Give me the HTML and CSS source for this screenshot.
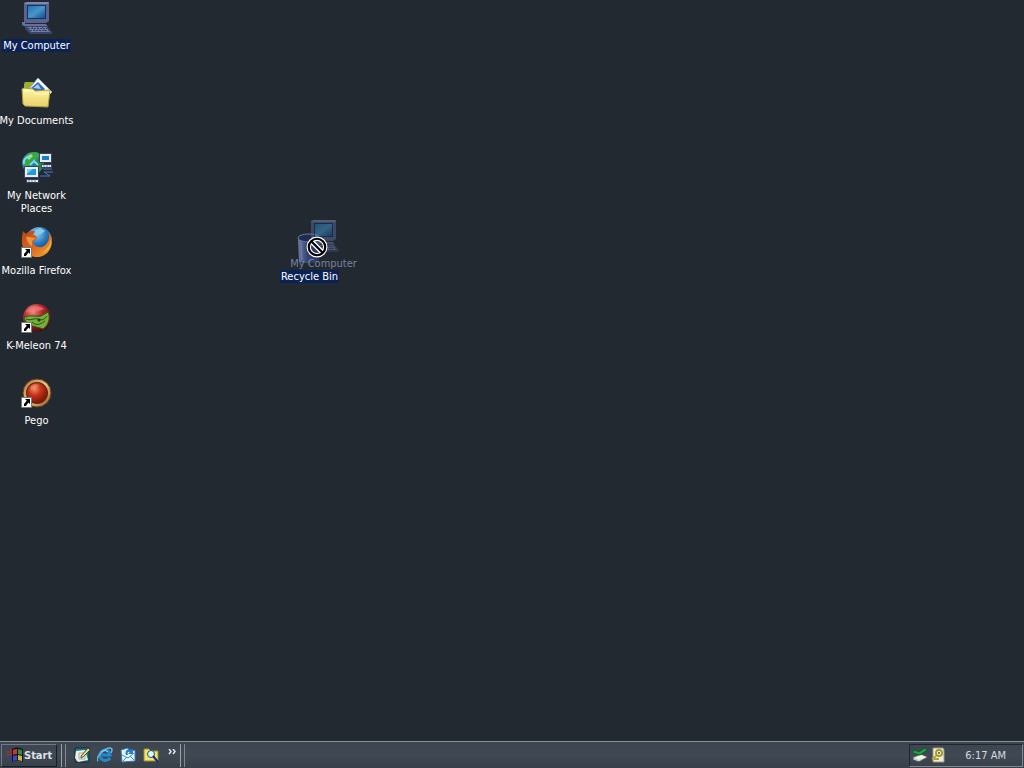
FILE: index.html
```
<!DOCTYPE html>
<html lang="en">
<head>
<meta charset="utf-8">
<title>Desktop</title>
<link rel="stylesheet" href="styles.css">
</head>
<body>
<svg class="defs" aria-hidden="true">
  <defs>
    <linearGradient id="screen" x1="0" y1="0" x2="1" y2="1"><stop offset="0" stop-color="#2274b4"/><stop offset=".5" stop-color="#4796c8"/><stop offset="1" stop-color="#12508c"/></linearGradient>
    <linearGradient id="folder" x1="0" y1="0" x2="0" y2="1"><stop offset="0" stop-color="#fff6a0"/><stop offset="1" stop-color="#e9cf68"/></linearGradient>
    <linearGradient id="bin" x1="0" y1="0" x2="1" y2="0"><stop offset="0" stop-color="#6e7db0"/><stop offset=".4" stop-color="#35436d"/><stop offset="1" stop-color="#28365d"/></linearGradient>
    <radialGradient id="earth" cx=".4" cy=".25" r=".8"><stop offset="0" stop-color="#91d5f3"/><stop offset=".5" stop-color="#2676bd"/><stop offset="1" stop-color="#123367"/></radialGradient>
    <linearGradient id="fox" x1="0" y1="0" x2="1" y2="1"><stop offset="0" stop-color="#b94417"/><stop offset=".55" stop-color="#df6c1e"/><stop offset="1" stop-color="#f2ac35"/></linearGradient>
    <radialGradient id="red" cx=".35" cy=".25" r=".8"><stop offset="0" stop-color="#f7948b"/><stop offset=".4" stop-color="#b92a31"/><stop offset="1" stop-color="#420a10"/></radialGradient>
    <radialGradient id="ruby" cx=".38" cy=".3" r=".7"><stop offset="0" stop-color="#f28b68"/><stop offset=".45" stop-color="#c73319"/><stop offset="1" stop-color="#7a1709"/></radialGradient>
    <linearGradient id="gold" x1="0" y1="0" x2="1" y2="1"><stop offset="0" stop-color="#a96d2b"/><stop offset=".5" stop-color="#e9ce8c"/><stop offset="1" stop-color="#895018"/></linearGradient>
    <g id="pc">
      <path d="M3 1 6 0H28V19L25 21H3Z" fill="#58648f"/>
      <path d="M3 1 6 0H28L27 2H4Z" fill="#7c88ae"/>
      <path d="M6 3H25V17H6Z" fill="#153065"/>
      <path d="M7 4H24V16H7Z" fill="url(#screen)"/>
      <path d="M1 20H4V22H25L27 25H5L1 23Z" fill="#66709a"/>
      <path d="M4 24H26L31 30V32H9L4 27Z" fill="#37446d"/>
      <path d="M6 25H25L29 30H10Z" fill="#7881a4"/>
      <path d="M7 26.5H26M9 28.5H28M11 25 15 30M16 25 20 30M21 25 25 30" stroke="#36436c" stroke-width="1" stroke-dasharray="2 1"/>
    </g>
    <g id="shortcut">
      <path d="M.5 20.500H10.500V30.500H.500Z" fill="#fff" stroke="#777"/>
      <path d="M4 22H9V27L7.500 25.500 5.500 28 5 29H3V27L5.800 23.800Z" fill="#000"/>
    </g>
  </defs>
</svg>

<main class="desktop">
  <nav class="icons" aria-label="Desktop icons">
    <button class="item selected">
      <svg class="icon" viewBox="0 0 32 32"><use href="#pc"/></svg>
      <span class="label">My Computer</span>
    </button>
    <button class="item">
      <svg class="icon" viewBox="0 0 32 32">
        <path d="M4 5H12L14 8V16H3V7Z" fill="#9dae32"/>
        <path d="M7 13 17 1 31 15 24 22Z" fill="#f5f9ff" stroke="#8ea6c5"/>
        <path d="M10 11 17 5 24 12 18 17Z" fill="#326bbb"/>
        <path d="M12 11 17 7 20 12Z" fill="#a9cbea"/>
        <path d="M1 12 3 11 12 12 14 14 29 13 27 30 4 29 2 27Z" fill="url(#folder)" stroke="#b09c40"/>
        <path d="M3 14 12 14 14 17H27" fill="none" stroke="#fffbd0"/>
      </svg>
      <span class="label">My Documents</span>
    </button>
    <button class="item">
      <svg class="icon" viewBox="0 0 32 32">
        <circle cx="12" cy="11" r="11" fill="#237ab9"/>
        <path d="M2 7 8 1 16 0 19 3 15 8 11 8 9 13 5 16 2 13Z" fill="#38a93e"/>
        <path d="M16 8 22 6V15L18 19 14 13Z" fill="#268b37"/>
        <path d="M5 5 10 2 12 4 8 8Z" fill="#a0e28b"/>
        <path d="M3 12C2 7 6 4 9 6M9 13 13 9 17 13" fill="none" stroke="#82d4ee" stroke-width="2"/>
        <g fill="#e8edf2" stroke="#354261"><path d="M18.500 1.500H30.500V10.500H18.500ZM20.500 12.500H30.500V15.500H20.500ZM3.500 14.500H17.500V25.500H3.500ZM5.500 27.500H17.500V30.500H5.500Z"/></g>
        <path d="M21 4H28V8H21Z" fill="#1780cc"/><path d="M6 17H15V23H6Z" fill="#2299db"/>
        <path d="M6 17H12L7 21H6Z" fill="#74d0ef"/>
        <path d="M19 24H29L23 20H32M22 17H31" fill="none" stroke="#4a78bb"/>
        <path d="M7 29H16M22 14H29" stroke="#767d87" stroke-dasharray="2 1"/>
      </svg>
      <span class="label">My Network<br>Places</span>
    </button>
    <button class="item">
      <svg class="icon" viewBox="0 0 32 32">
        <circle cx="18" cy="13" r="13" fill="url(#earth)"/>
        <path d="M13 4 19 1 24 4 20 7 15 7Z" fill="#8dc8e4"/>
        <path d="M2 4 5 7C7 4 10 4 14 4L12 8C15 8 16 10 16 12L12 14C12 19 18 22 23 19C29 15 29 8 27 5C31 8 32 14 30 20C26 31 13 33 6 26C0 21 0 13 2 4Z" fill="url(#fox)"/>
        <path d="M29 9C31 14 28 22 21 26C26 25 30 21 30 15Z" fill="#f2bd43"/>
        <path d="M5 10C8 9 11 11 15 11L11 14 11 19C7 17 6 13 5 10Z" fill="#ed9440"/>
        <use href="#shortcut"/>
      </svg>
      <span class="label">Mozilla Firefox</span>
    </button>
    <button class="item">
      <svg class="icon" viewBox="0 0 32 32">
        <circle cx="16" cy="16" r="14" fill="url(#red)"/>
        <path d="M3 16C8 12 15 15 20 14L27 10C30 16 27 24 22 27C15 24 6 25 3 16Z" fill="#77ae37" stroke="#31531b"/>
        <path d="M5 17C10 19 12 16 17 17C20 18 22 19 26 14M11 20C16 25 21 21 24 19" fill="none" stroke="#284d18"/>
        <circle cx="18" cy="18" r="1.500" fill="#17350f"/>
        <path d="M5 10C9 4 18 2 23 7C17 10 10 9 5 10Z" fill="#ee7b77" opacity=".7"/>
        <use href="#shortcut"/>
      </svg>
      <span class="label">K-Meleon 74</span>
    </button>
    <button class="item">
      <svg class="icon" viewBox="0 0 32 32">
        <circle cx="16" cy="16" r="14" fill="url(#gold)" stroke="#674014"/>
        <circle cx="16" cy="16" r="11" fill="#6e210d"/>
        <circle cx="16" cy="16" r="10" fill="url(#ruby)"/>
        <path d="M10 9 14 7 18 8 14 12 10 13Z" fill="#f1a27f" opacity=".45"/>
        <use href="#shortcut"/>
      </svg>
      <span class="label">Pego</span>
    </button>
  </nav>

  <button class="item selected recycle">
    <svg class="icon" viewBox="0 0 32 32">
      <path d="M4 5 5 28C9 31 20 31 25 28L27 5Z" fill="url(#bin)"/>
      <ellipse cx="15" cy="5" rx="11" ry="4" fill="#202b50" stroke="#6a789f"/>
      <path d="M7 10 8 27" stroke="#8290bd" opacity=".6"/>
    </svg>
    <span class="label">Recycle Bin</span>
  </button>
  <div class="item ghost">
    <svg class="icon" viewBox="0 0 32 32"><use href="#pc"/></svg>
    <span class="label">My Computer</span>
  </div>
  <svg class="cursor" viewBox="0 0 20 20" aria-label="Not allowed">
    <g fill="none"><circle cx="10" cy="10" r="7.500" stroke="#fff" stroke-width="4"/><path d="M5 5 15 15" stroke="#fff" stroke-width="4.500"/><circle cx="10" cy="10" r="7.500" stroke="#000" stroke-width="2"/><path d="M5 5 15 15" stroke="#000" stroke-width="2"/></g>
  </svg>
</main>

<footer class="taskbar">
  <button class="start">
    <svg class="flag" viewBox="0 0 18 16" aria-hidden="true">
      <path d="M6 2C9 0 13 0 17 2V15C13 13 10 13 6 15Z" fill="#10131a"/>
      <path d="M1 4H3V6H1ZM4 3H6V5H4ZM1 7H3V9H1ZM4 6H6V8H4Z" fill="#9f3035"/>
      <path d="M1 11H3V13H1ZM4 10H6V12H4Z" fill="#3338a2"/>
      <path d="M7 3C8 2 10 2 11 2V7C10 7 8 7 7 8Z" fill="#c93835"/>
      <path d="M12 2 16 3V8L12 7Z" fill="#388c42"/>
      <path d="M7 9 11 8V13L7 14Z" fill="#4148c6"/>
      <path d="M12 8 16 9V14L12 13Z" fill="#c9b941"/>
    </svg>
    <span>Start</span>
  </button>
  <div class="grip"></div>
  <nav class="quick" aria-label="Quick launch">
    <button aria-label="Show Desktop"><svg class="small" viewBox="0 0 16 16">
      <path d="M1 1H15V15H1Z" fill="#167c8c" stroke="#122b3a"/><path d="M2 4 11 3 14 13 4 15 1 11Z" fill="#f1efe1"/>
      <path d="M5 6H11V12H5Z" fill="none" stroke="#a6aaa0"/><path d="M7 9 14 1 16 3 9 10 7 11Z" fill="#f0d384" stroke="#4c5040"/>
    </svg></button>
    <button aria-label="Internet Explorer"><svg class="small" viewBox="0 0 16 16">
      <path d="M13 11C10 15 3 14 3 8C3 2 12 1 13 8H5" fill="none" stroke="#2389cf" stroke-width="3"/>
      <path d="M1 14C-2 11 7 1 13 1C16 1 15 4 14 6" fill="none" stroke="#67b8df" stroke-width="1.500"/>
      <path d="M4 5C6 3 9 3 11 5" fill="none" stroke="#9fe1f5"/>
    </svg></button>
    <button aria-label="Outlook Express"><svg class="small" viewBox="0 0 16 16">
      <path d="M1 3 8 1 9 5 15 3V14L2 15Z" fill="#e6f5ff" stroke="#387bb3"/>
      <path d="M2 8 8 11 14 6M3 14 7 10M14 13 10 9" fill="none" stroke="#418cc8"/>
      <path d="M6 8C4 3 9 1 12 3L13 1V7H8L10 5C8 4 7 5 8 8Z" fill="#2380d0"/>
    </svg></button>
    <button aria-label="Search"><svg class="small" viewBox="0 0 16 16">
      <path d="M1 2H6L8 4H15V14H1Z" fill="#f3e46e" stroke="#958c30"/><circle cx="8" cy="7" r="3.500" fill="#d8f9ff" stroke="#23536c"/>
      <path d="M10 9 15 15" stroke="#182b7c" stroke-width="2"/>
    </svg></button>
    <button class="more" aria-label="More items"><svg class="chevrons" viewBox="0 0 8 6"><path d="M1 0 3 2.500 1 5M5 0 7 2.500 5 5" fill="none" stroke="#e1e6eb" stroke-width="1.500"/></svg></button>
  </nav>
  <div class="grip"></div>
  <div class="tray">
    <svg class="small" viewBox="0 0 16 16" aria-label="Safely remove hardware">
      <path d="M1 10 9 7 16 10 7 15 1 13Z" fill="#c8ceca" stroke="#48514c"/><path d="M3 11 9 8 14 10 7 13Z" fill="#f1f3ed"/>
      <path d="M1 3 5 4 7 5 13 1 15 3 8 8 1 6Z" fill="#25a548" stroke="#0b5f24"/>
    </svg>
    <svg class="small" viewBox="0 0 16 16" aria-label="Updates">
      <path d="M3 1H13L14 3V15H3Z" fill="#eeeede" stroke="#99977d"/>
      <circle cx="9" cy="6" r="3" fill="#fff" stroke="#a39827" stroke-width="2"/><path d="M9 5V7" stroke="#817812" stroke-width="2"/>
      <path d="M6 9 2 12M4 12H9" stroke="#b2a42c" stroke-width="2"/>
    </svg>
    <time class="clock">6:17 AM</time>
  </div>
</footer>
</body>
</html>
```
FILE: styles.css
```
* { box-sizing: border-box; }
body {
  margin: 0;
  min-height: 100vh;
  display: flex;
  flex-direction: column;
  background: #222930;
  color: #fff;
  font: 11px/13px "DejaVu Sans Condensed", "DejaVu Sans", sans-serif;
}
button { margin: 0; padding: 0; border: 0; background: none; color: inherit; font: inherit; }
svg { display: block; flex: none; }
.defs { position: absolute; width: 0; height: 0; }
.desktop { position: relative; flex: 1; overflow: hidden; }
.icons { display: flex; flex-direction: column; align-items: flex-start; padding-top: 2px; }
.item {
  width: 73px;
  height: 75px;
  display: flex;
  flex-direction: column;
  align-items: center;
  gap: 5px;
  text-align: center;
}
.icon { width: 32px; height: 32px; }
.label { white-space: nowrap; }
.selected .label { background: #0b2257; padding: 0 1px; }
.recycle { position: absolute; left: 273px; top: 233px; }
.ghost { position: absolute; left: 287px; top: 220px; color: #b9c9f4; opacity: .55; }
.cursor { position: absolute; left: 306px; top: 236px; width: 22px; height: 22px; }
.taskbar {
  height: 27px;
  display: flex;
  align-items: stretch;
  gap: 4px;
  padding: 2px 1px 1px;
  background: linear-gradient(#3d454f, #404853 50%, #373f49);
  border-top: 1px solid #89929a;
}
.start {
  display: flex;
  align-items: center;
  padding: 0 4px 1px;
  border: 1px solid;
  border-color: #727b85 #181e25 #181e25 #727b85;
  color: #dce1e6;
  font-weight: bold;
}
.flag { width: 18px; height: 16px; }
.grip { width: 5px; border-left: 1px solid #9aa3ac; border-right: 1px solid #818a93; }
.quick { display: flex; align-items: center; gap: 7px; padding: 0 0 2px 4px; }
.small { width: 16px; height: 16px; }
.more { align-self: flex-start; padding: 5px 0 0 2px; }
.chevrons { width: 8px; height: 6px; }
.tray {
  margin-left: auto;
  display: flex;
  align-items: center;
  gap: 2px;
  padding: 0 16px 2px 2px;
  border: 1px solid;
  border-color: #20262e #808993 #808993 #20262e;
}
.clock { padding: 2px 0 0 17px; color: #d7dce1; }
```
